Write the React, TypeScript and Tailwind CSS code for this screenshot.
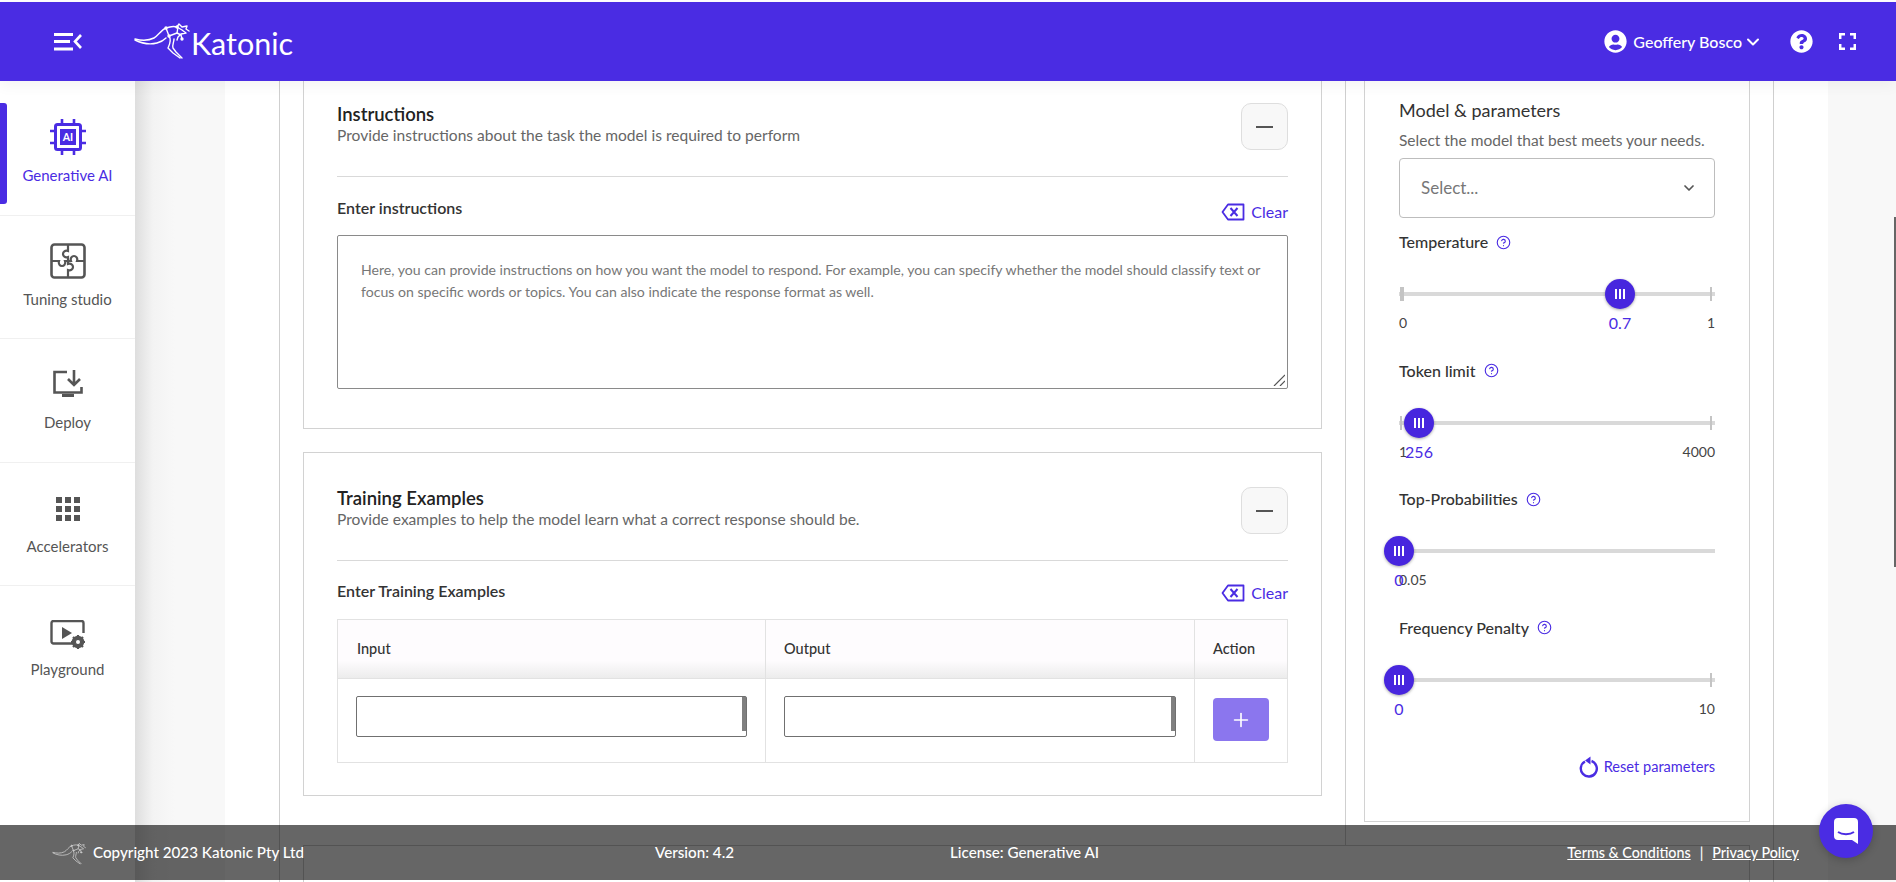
import { ChevronDown, CircleHelp, Plus } from "lucide-react";
import { FaQuestionCircle, FaUserCircle } from "react-icons/fa";

const Kangaroo = ({ className }: { className: string }) => (
  <svg viewBox="0 0 60 40" fill="none" stroke="currentColor" strokeWidth="1.400" strokeLinecap="round" strokeLinejoin="round" className={className}>
    <path d="M5 19c6 1.500 13 2 19-1 4-2 7-8 12-10 4-1.500 8-2 11-1l5 3 4 3-5 1-3 3-1 3" />
    <path d="M5 20c6 3 14 5 22 3 4-1 7-3 9-5" />
    <path d="M36 8l3 8 8-3 1-6M47 7l2-3 3 3 5-1-1 3 3 2" />
    <path d="M39 16c2 3 1 8-1 12l5 5 7 5M44 19c0 3-2 6-1 9l3 4 6 6" />
    <path d="M47 13l4 2 1 4" />
    <circle cx="36" cy="8" r="1" fill="currentColor" />
    <circle cx="47" cy="7" r="1" fill="currentColor" />
    <circle cx="39" cy="16" r="1" fill="currentColor" />
    <circle cx="52" cy="19" r="1" fill="currentColor" />
  </svg>
);

const ChipIcon = () => (
  <svg viewBox="0 0 36 36" className="h-9 w-9 text-[#4a2ce3]" fill="none" stroke="currentColor">
    <path d="M12 0v5M24 0v5M12 31v5M24 31v5M0 12h5M0 24h5M31 12h5M31 24h5" strokeWidth="2.600" />
    <rect x="5.500" y="5.500" width="25" height="25" rx="2" strokeWidth="3" />
    <rect x="10" y="10" width="16" height="16" fill="currentColor" stroke="none" />
    <text x="18" y="22" textAnchor="middle" fontSize="10.500" fontWeight="700" fill="#fff" stroke="none" fontFamily="Lato, sans-serif">AI</text>
  </svg>
);

const PuzzleIcon = () => (
  <svg viewBox="0 0 36 36" className="h-9 w-9 text-[#555]" fill="none" stroke="currentColor" strokeWidth="2.200">
    <rect x="1.500" y="1.500" width="33" height="33" rx="3" strokeWidth="2.600" />
    <path d="M18 2v6c-3-1-5 1-5 3s2 4 5 3v4h3c-1-3 1-5 3-5s4 2 3 5h7" />
    <path d="M2 18h7c-1 3 1 5 3 5s4-2 3-5h3v3c3-1 5 1 5 3s-2 4-5 3v7" />
  </svg>
);

const DeployIcon = () => (
  <svg viewBox="0 0 32 30" className="h-[30px] w-8 translate-y-[1px] text-[#555]" fill="none" stroke="currentColor" strokeWidth="2.600">
    <path d="M15 2H2.500v20.500h27V17" />
    <path d="M22 0v14M16 9l6 6 6-6" />
    <path d="M10 24h12v3H10z" fill="currentColor" stroke="none" />
  </svg>
);

const GridIcon = () => (
  <div className="grid h-6 w-6 translate-y-[1px] grid-cols-3 gap-[3px]">
    {Array.from({ length: 9 }).map((_, i) => (
      <span key={i} className="bg-[#555]" />
    ))}
  </div>
);

const PlaygroundIcon = () => (
  <svg viewBox="0 0 36 30" className="h-[30px] w-9 translate-y-[4px] text-[#555]" fill="none">
    <path d="M24 23.500H3.500a2 2 0 0 1-2-2V3a2 2 0 0 1 2-2h28a2 2 0 0 1 2 2v10" stroke="currentColor" strokeWidth="2.400" />
    <path d="M12 7l10 6-10 6z" fill="currentColor" />
    <circle cx="28" cy="22" r="4.500" stroke="currentColor" strokeWidth="3.500" />
    <path d="M28 15v14M21 22h14M23 17l10 10M33 17L23 27" stroke="currentColor" strokeWidth="2.200" />
    <circle cx="28" cy="22" r="2" fill="#fff" />
  </svg>
);

const ClearIcon = () => (
  <svg viewBox="0 0 24 18" className="h-[18px] w-6 text-[#4a2ce3]" fill="none" stroke="currentColor" strokeWidth="1.800">
    <path d="M7 1.500h15.500v15H7L1.500 9z" strokeLinejoin="round" />
    <path d="M9.500 5l7 8M16.500 5l-7 8" strokeWidth="2" />
  </svg>
);

const ResetIcon = () => (
  <svg viewBox="0 0 20 22" className="h-[22px] w-5 text-[#4a2ce3]" fill="none" stroke="currentColor" strokeWidth="2.400">
    <path d="M6 5.500a8 8 0 1 0 6.500-.500" />
    <path d="M11.500 0.500v8L6 4.500z" fill="currentColor" stroke="none" />
  </svg>
);

const navItems = [
  { label: "Generative AI", icon: <ChipIcon />, active: true },
  { label: "Tuning studio", icon: <PuzzleIcon /> },
  { label: "Deploy", icon: <DeployIcon /> },
  { label: "Accelerators", icon: <GridIcon /> },
  { label: "Playground", icon: <PlaygroundIcon /> },
];

const Sidebar = () => (
  <aside className="z-10 w-[135px] shrink-0 bg-white pt-[11px]">
    {navItems.map((item) => (
      <div key={item.label} className="relative flex h-[123.500px] flex-col items-center border-b border-[#f0f0f0] last:border-b-0">
        {item.active && <span className="absolute left-0 top-[11px] h-[101px] w-[7px] rounded-r-[3px] bg-[#4a2ce3]" />}
        <div className="flex h-[72px] items-center justify-center pt-[18px]">{item.icon}</div>
        <span className={`mt-[1px] text-[15px] leading-5 ${item.active ? "text-[#4a2ce3]" : "text-[#555]"}`}>{item.label}</span>
      </div>
    ))}
  </aside>
);

const CardHead = ({ title, sub }: { title: string; sub: string }) => (
  <div className="flex h-[74px] items-start justify-between border-b border-[#d9d9d9]">
    <div>
      <h2 className="text-[18.500px] font-semibold leading-[22px] text-[#222]">{title}</h2>
      <p className="text-[15.550px] leading-[20px] text-[#666]">{sub}</p>
    </div>
    <button className="flex h-[47px] w-[47px] items-center justify-center rounded-[10px] border border-[#dedede] bg-[#f8f8f8]">
      <span className="h-[2px] w-[17px] bg-[#555]" />
    </button>
  </div>
);

const FieldHead = ({ label, labelClass, clearClass }: { label: string; labelClass: string; clearClass: string }) => (
  <div className="flex h-6 items-start justify-between">
    <span className={`text-[16px] font-semibold leading-5 text-[#333] ${labelClass}`}>{label}</span>
    <span className={`flex items-center gap-[6px] text-[16px] text-[#4a2ce3] ${clearClass}`}>
      <ClearIcon />
      Clear
    </span>
  </div>
);

const Instructions = () => (
  <section className="h-[348px] border border-t-0 border-[#d2d2d2] bg-white px-[33px] pt-[22px]">
    <CardHead title="Instructions" sub="Provide instructions about the task the model is required to perform" />
    <div className="mt-[20px]">
      <FieldHead label="Enter instructions" labelClass="mt-[1px]" clearClass="mt-[3px]" />
    </div>
    <div className="relative mt-[14px] h-[154px] rounded-[2px] border border-[#8a8a8a] px-[23px] py-[23px] text-[14.100px] leading-[22px] text-[#777]">
      Here, you can provide instructions on how you want the model to respond. For example, you can specify whether the model should classify text or focus on specific words or topics. You can also indicate the response format as well.
      <svg viewBox="0 0 12 12" className="absolute bottom-[2px] right-[2px] h-3 w-3 text-[#555]" stroke="currentColor" strokeWidth="1.200">
        <path d="M1 12L12 1M7 12l5-5" />
      </svg>
    </div>
  </section>
);

const TrainingInput = () => (
  <div className="relative h-[41px] rounded-[2px] border border-[#707070] bg-white">
    <span className="absolute right-0 top-0 h-[34px] w-[4px] bg-[#808080]" />
  </div>
);

const Training = () => (
  <section className="mt-[23px] h-[344px] border border-[#d2d2d2] bg-white px-[33px] pt-[34px]">
    <CardHead title="Training Examples" sub="Provide examples to help the model learn what a correct response should be." />
    <div className="mt-[20px]">
      <FieldHead label="Enter Training Examples" labelClass="" clearClass="" />
    </div>
    <div className="mt-[14px] border border-[#e2e2e2]">
      <div className="grid h-[59px] grid-cols-[428px_429px_1fr] border-b border-[#e2e2e2] bg-gradient-to-b from-[#fefcfe] from-70% to-[#ececec] text-[14.500px] font-medium text-[#333]">
        <div className="flex items-center border-r border-[#e2e2e2] pl-[19px]">Input</div>
        <div className="flex items-center border-r border-[#e2e2e2] pl-[18px]">Output</div>
        <div className="flex items-center pl-[18px]">Action</div>
      </div>
      <div className="grid h-[83px] grid-cols-[428px_429px_1fr]">
        <div className="border-r border-[#e2e2e2] pl-[18px] pr-[18px] pt-[17px]">
          <TrainingInput />
        </div>
        <div className="border-r border-[#e2e2e2] pl-[18px] pr-[18px] pt-[17px]">
          <TrainingInput />
        </div>
        <div className="pl-[18px] pt-[19px]">
          <button className="flex h-[43px] w-[56px] items-center justify-center rounded-[4px] bg-[#8b76ee] text-white">
            <Plus size={22} strokeWidth={1.800} />
          </button>
        </div>
      </div>
    </div>
  </section>
);

const sliders = [
  { label: "Temperature", min: "0", max: "1", value: "0.7", pos: 221, ticks: true, heavy: true },
  { label: "Token limit", min: "1", max: "4000", value: "256", pos: 20, ticks: true, heavy: false },
  { label: "Top-Probabilities", min: "0.05", max: "", value: "0", pos: 0, ticks: false, heavy: false },
  { label: "Frequency Penalty", min: "", max: "10", value: "0", pos: 0, ticks: true, heavy: false },
];

const ParamSlider = ({ s }: { s: (typeof sliders)[number] }) => (
  <div className="h-[129px]">
    <div className="flex h-[24px] items-center gap-[8px] text-[16px] font-medium text-[#333]">
      {s.label}
      <CircleHelp size={15} strokeWidth={1.800} className="text-[#4a2ce3]" />
    </div>
    <div className="relative mt-[38px] h-[4px] bg-[#d9d9d9]">
      {s.ticks && s.min && <span className={`absolute left-[1px] top-[-5px] h-[14px] ${s.heavy ? "w-[4px]" : "w-[2px]"} bg-[#c4c4c4]`} />}
      {s.ticks && <span className="absolute right-[3px] top-[-5px] h-[14px] w-[2px] bg-[#c4c4c4]" />}
      <span
        className="absolute top-[-13px] flex h-[30px] w-[30px] -translate-x-1/2 items-center justify-center gap-[2px] rounded-full bg-[#4726de] shadow-[0_1px_3px_rgba(0,0,0,.35)]"
        style={{ left: s.pos }}
      >
        <i className="h-[10px] w-[2px] bg-white" />
        <i className="h-[10px] w-[2px] bg-white" />
        <i className="h-[10px] w-[2px] bg-white" />
      </span>
      <span
        className="absolute top-[21px] -translate-x-1/2 text-[16px] leading-[20px] text-[#4a2ce3]"
        style={{ left: s.pos }}
      >
        {s.value}
      </span>
    </div>
    <div className="mt-[18px] flex justify-between text-[14px] leading-[18px] text-[#444]">
      <span>{s.min}</span>
      <span>{s.max}</span>
    </div>
  </div>
);

const ParametersCard = () => (
  <section className="h-[741px] w-[386px] border border-t-0 border-[#d2d2d2] bg-white px-[34px] pt-[16px]">
    <h2 className="text-[18px] leading-[26px] text-[#333]">Model &amp; parameters</h2>
    <p className="mt-[7px] text-[15.500px] leading-[20px] text-[#666]">Select the model that best meets your needs.</p>
    <div className="mt-[8px] flex h-[60px] items-center justify-between rounded-[4px] border border-[#bdbdbd] pl-[21px] pr-[17px] text-[17px] text-[#777]">
      Select...
      <ChevronDown size={16} strokeWidth={2.600} className="text-[#555]" />
    </div>
    <div className="mt-[12px]">
      {sliders.map((s) => (
        <div key={s.label} className="-mb-[0.500px]">
          <ParamSlider s={s} />
        </div>
      ))}
    </div>
    <div className="mt-[12px] flex items-center justify-end gap-[5px] text-[14.600px] text-[#4a2ce3]">
      <ResetIcon />
      Reset parameters
    </div>
  </section>
);

const Footer = () => (
  <footer className="absolute inset-x-0 bottom-[2px] z-20 flex h-[55px] items-center bg-black/60 pl-[50px] pr-[97px] text-white font-medium">
    <div className="flex w-[605px] items-center gap-[7px] text-[15.200px]">
      <Kangaroo className="h-[24px] w-[36px] text-[#c8c8c8]" />
      Copyright 2023 Katonic Pty Ltd
    </div>
    <span className="w-[295px] text-[15.200px]">Version: 4.2</span>
    <span className="text-[15.200px]">License: Generative AI</span>
    <div className="ml-auto flex items-center gap-[9px] text-[14.300px]">
      <span className="underline">Terms &amp; Conditions</span>
      <span>|</span>
      <span className="underline">Privacy Policy</span>
    </div>
  </footer>
);

const Header = () => (
  <header className="relative z-30 flex h-[79px] items-center bg-[#4a2ce3] pl-[54px] pr-[40px] text-white shadow-[0_4px_14px_rgba(0,0,0,.05)]">
    <svg viewBox="0 0 28 20" className="h-5 w-7" fill="none" stroke="currentColor">
      <path d="M0 2.500h19M0 9.500h16M0 17h19" strokeWidth="3" />
      <path d="M27 3l-6 6.500 6 6.500" strokeWidth="2.600" />
    </svg>
    <div className="ml-[48px] flex items-center">
      <Kangaroo className="-mt-[3px] h-[40px] w-[60px]" />
      <span className="ml-[1px] mt-[4px] text-[30.500px] leading-none">Katonic</span>
    </div>
    <div className="ml-auto flex items-center">
      <FaUserCircle size={23} />
      <span className="ml-[6px] text-[16px] font-medium">Geoffery Bosco</span>
      <ChevronDown size={20} strokeWidth={2.400} className="ml-[1px]" />
      <FaQuestionCircle size={23} className="ml-[27px]" />
      <svg viewBox="0 0 17 17" className="ml-[26px] h-[17px] w-[17px]" fill="none" stroke="currentColor" strokeWidth="2.500">
        <path d="M1.200 6V1.200H6M11 1.200h4.800V6M15.800 11v4.800H11M6 15.800H1.200V11" />
      </svg>
    </div>
  </header>
);

export default function App() {
  return (
    <div className="relative h-screen w-full overflow-hidden bg-white pt-[2px] font-['Lato','Liberation_Sans',sans-serif]">
      <Header />
      <div className="flex h-[801px]">
        <Sidebar />
        <div className="w-[90px] shrink-0 bg-[linear-gradient(to_right,#dedede,#f3f3f3_18px,#f8f8f8_40px)]" />
        <div className="w-[54px] shrink-0" />
        <main className="w-[1495px] shrink-0 border-x border-[#cfcfcf]">
          <div className="flex h-[764px]">
            <div className="h-full w-[1066px] shrink-0 border-r border-[#cfcfcf] px-[23px]">
              <Instructions />
              <Training />
            </div>
            <div className="pl-[18px]">
              <ParametersCard />
            </div>
          </div>
          <div className="mx-[23px] h-[60px] w-[1447px] border border-[#cfcfcf]" />
        </main>
        <div className="w-[54px] shrink-0" />
        <div className="flex-1 bg-[#f8f8f8]" />
      </div>
      <Footer />
      <span className="absolute right-0 top-[217px] h-[350px] w-[2px] bg-[#666]" />
      <button className="absolute left-[1819px] top-[804px] z-30 flex h-[54px] w-[54px] items-center justify-center rounded-full bg-[#4a2ce3] shadow-[0_2px_8px_rgba(0,0,0,.2)]">
        <svg viewBox="0 0 24 26" className="h-[26px] w-6">
          <path d="M4 0h16a4 4 0 0 1 4 4v22l-6-4H4a4 4 0 0 1-4-4V4a4 4 0 0 1 4-4z" fill="#fff" />
          <path d="M4 14c4 3 12 3 16 0" stroke="#4a2ce3" strokeWidth="1.800" fill="none" />
        </svg>
      </button>
    </div>
  );
}
